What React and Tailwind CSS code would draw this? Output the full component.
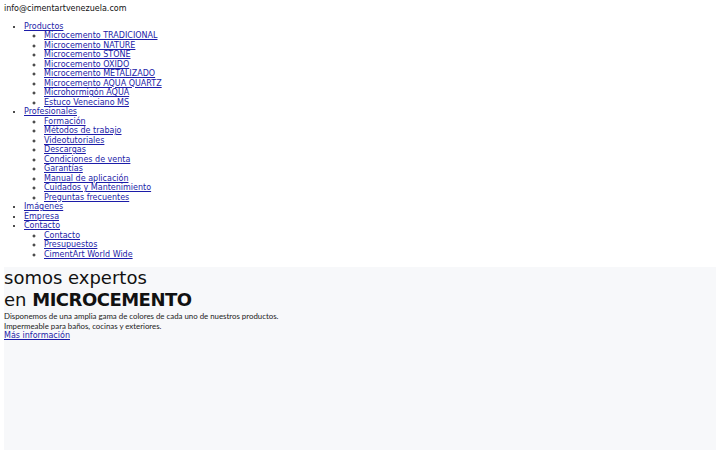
import React from "react";

const menu = [
  {
    label: "Productos",
    children: [
      "Microcemento TRADICIONAL",
      "Microcemento NATURE",
      "Microcemento STONE",
      "Microcemento OXIDO",
      "Microcemento METALIZADO",
      "Microcemento AQUA QUARTZ",
      "Microhormigón AQUA",
      "Estuco Veneciano MS",
    ],
  },
  {
    label: "Profesionales",
    children: [
      "Formación",
      "Métodos de trabajo",
      "Videotutoriales",
      "Descargas",
      "Condiciones de venta",
      "Garantías",
      "Manual de aplicación",
      "Cuidados y Mantenimiento",
      "Preguntas frecuentes",
    ],
  },
  { label: "Imágenes" },
  { label: "Empresa" },
  {
    label: "Contacto",
    children: ["Contacto", "Presupuestos", "CimentArt World Wide"],
  },
];

const linkCls = "text-[#1c1ca8] underline";

const App = () => {
  return (
    <div className="bg-white p-[4px] font-['DejaVu_Sans',sans-serif] text-[8px] leading-[9.5px] text-[#111]">
      <div>info@cimentartvenezuela.com</div>

      <ul className="my-[8px] list-disc pl-[20px]">
        {menu.map((item) => (
          <li key={item.label}>
            <a href="#" className={linkCls}>
              {item.label}
            </a>
            {item.children && (
              <ul className="list-[circle] pl-[20px]">
                {item.children.map((c) => (
                  <li key={c}>
                    <a href="#" className={linkCls}>
                      {c}
                    </a>
                  </li>
                ))}
              </ul>
            )}
          </li>
        ))}
      </ul>

      <section className="min-h-[300px] bg-[#f7f8fa]">
        <h1 className="font-['DejaVu_Sans',sans-serif] text-[18px] leading-[22px] font-normal text-[#111]">
          somos expertos
          <br />
          en{" "}
          <strong className="font-bold tracking-[-0.5px]">MICROCEMENTO</strong>
        </h1>
        <p className="font-['Lato',sans-serif] text-[7.85px] leading-[10px] text-[#222]">
          Disponemos de una amplia gama de colores de cada uno de nuestros
          productos.
          <br />
          Impermeable para baños, cocinas y exteriores.
        </p>
        <a href="#" className={linkCls}>
          Más información
        </a>
      </section>
    </div>
  );
};

export default App;
